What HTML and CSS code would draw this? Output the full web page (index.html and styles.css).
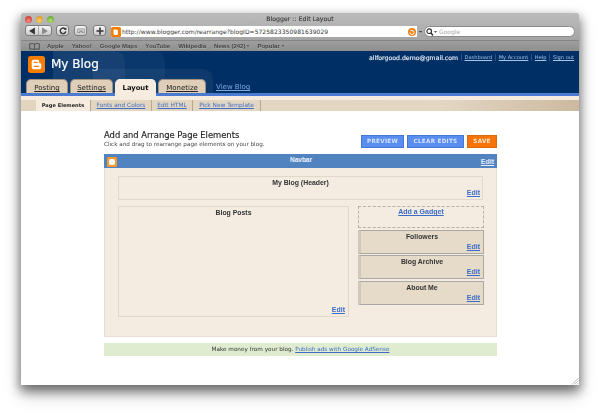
FILE: index.html
```html
<!DOCTYPE html>
<html lang="en">
<head>
<meta charset="utf-8">
<title>Blogger :: Edit Layout</title>
<link rel="stylesheet" href="styles.css">
</head>
<body>
<div class="window">
  <div class="chrome">
    <div class="titlebar">
      <div class="lights"><span class="light red"></span><span class="light amber"></span><span class="light green"></span></div>
      <div class="wintitle">Blogger :: Edit Layout</div>
    </div>
    <div class="toolbar">
      <div class="tbtn double">
        <span class="half"><svg width="7" height="7" viewBox="0 0 7 7"><path d="M6 0.5V6.5L1 3.5Z" fill="#333"/></svg></span>
        <span class="half"><svg width="7" height="7" viewBox="0 0 7 7"><path d="M1 0.5V6.5L6 3.5Z" fill="#888"/></svg></span>
      </div>
      <div class="tbtn"><svg width="9" height="9" viewBox="0 0 9 9"><path d="M7 2.2A3.2 3.2 0 1 0 7.7 5" fill="none" stroke="#333" stroke-width="1.5"/><path d="M5.4 2.8L8.4 3.4V0.4Z" fill="#333"/></svg></div>
      <div class="tbtn wide"><svg width="13" height="9" viewBox="0 0 13 9"><path d="M1 1H12V7H8L6.5 5L5 7H1Z" fill="none" stroke="#777" stroke-width="1"/><path d="M3 3L10 6M10 3L3 6" stroke="#777" stroke-width=".8"/></svg></div>
      <div class="tbtn add"><svg width="9" height="9" viewBox="0 0 9 9"><path d="M4.500 .5V8.500M.5 4.500H8.500" stroke="#333" stroke-width="1.800"/></svg></div>
      <div class="urlbar">
        <svg class="favicon" width="10" height="10" viewBox="0 0 10 10"><rect width="10" height="10" rx="1.500" fill="#f57d00"/><path d="M3 2.500H5.500Q7 2.500 7 4V6.500Q7 8 5.500 8H4Q2.500 8 2.500 6.500V3Q2.500 2.500 3 2.500Z" fill="#fff"/></svg>
        <span class="url">http://www.blogger.com/rearrange?blogID=5725823350981639029</span>
        <svg class="rss" width="8" height="8" viewBox="0 0 8 8"><circle cx="4" cy="4" r="4" fill="#f0801a"/><path d="M2 4.500A2 2 0 1 0 4 2.500H2.500" fill="none" stroke="#fff" stroke-width="1"/></svg>
      </div>
      <span class="dash">-</span>
      <div class="search">
        <svg width="11" height="8" viewBox="0 0 11 8"><circle cx="3.200" cy="3.200" r="2.300" fill="none" stroke="#333" stroke-width="1.200"/><path d="M5 5L7 7.500" stroke="#333" stroke-width="1.400"/><path d="M8 3H11L9.500 5Z" fill="#555"/></svg>
        <span>Google</span>
      </div>
    </div>
    <div class="bookmarks">
      <svg width="11" height="7" viewBox="0 0 11 7"><path d="M5.500 1.200Q3 0 .7 .8V6.200Q3 5.500 5.500 6.500Q8 5.500 10.300 6.200V.8Q8 0 5.500 1.200ZM5.500 1.200V6.500" fill="none" stroke="#444" stroke-width=".8"/></svg>
      <span class="bm first">Apple</span><span class="bm">Yahoo!</span><span class="bm">Google Maps</span><span class="bm">YouTube</span><span class="bm">Wikipedia</span><span class="bm">News (242)<i class="caret"></i></span><span class="bm">Popular<i class="caret"></i></span>
    </div>
  </div>

  <div class="blogheader">
    <svg class="watermark" width="165" height="42" viewBox="0 0 165 42"><path d="M0 0H60Q72 0 72 12V42H0Z" fill="#fff" opacity=".05"/><path d="M0 0H100Q112 0 112 12V42H0Z" fill="#fff" opacity=".04"/><path d="M40 18H148Q160 18 160 30V42H40Z" fill="#fff" opacity=".05"/></svg>
    <div class="headrow">
      <div class="brand">
        <svg class="logo" width="17" height="17" viewBox="0 0 16 16"><rect width="16" height="16" rx="2.500" fill="#f57d00"/><path d="M5.500 3.500H9Q10.500 3.500 10.500 5.500V6.500Q12.500 6.500 12.500 8V10Q12.500 12.500 10 12.500H6Q3.500 12.500 3.500 10V5.500Q3.500 3.500 5.500 3.500Z" fill="#fff"/><path d="M6 6H8.500M6 9.800H10" stroke="#f57d00" stroke-width="1.200" stroke-linecap="round"/></svg>
        <span class="blogname">My Blog</span>
      </div>
      <div class="account">
        <span class="email">allforgood.demo@gmail.com</span>
        <a class="alink">Dashboard</a><a class="alink">My Account</a><a class="alink">Help</a><a class="alink">Sign out</a>
      </div>
    </div>
    <div class="tabs">
      <a class="tab tposting">Posting</a>
      <a class="tab tsettings">Settings</a>
      <a class="tab active">Layout</a>
      <a class="tab tmonetize">Monetize</a>
      <a class="viewblog">View Blog</a>
    </div>
  </div>
  <div class="blueline"></div>
  <div class="creamline"></div>
  <div class="subnav">
    <span class="sub current">Page Elements</span>
    <a class="sub s1">Fonts and Colors</a>
    <a class="sub s2">Edit HTML</a>
    <a class="sub s3">Pick New Template</a>
  </div>

  <div class="content">
    <div class="titlerow">
      <div class="titles">
        <h1>Add and Arrange Page Elements</h1>
        <p>Click and drag to rearrange page elements on your blog.</p>
      </div>
      <div class="actions">
        <span class="btn blue bprev">PREVIEW</span>
        <span class="btn blue bclear">CLEAR EDITS</span>
        <span class="btn orange bsave">SAVE</span>
      </div>
    </div>
    <div class="panel">
      <div class="navbar">
        <svg class="navicon" width="10" height="10" viewBox="0 0 10 10"><rect width="10" height="10" rx="1.500" fill="#f59a2e"/><path d="M3.500 2H6Q8 2 8 4V6Q8 8 6 8H4Q2 8 2 6V3.500Q2 2 3.500 2Z" fill="#fff"/></svg>
        <span class="navtitle">Navbar</span>
        <a class="navedit">Edit</a>
      </div>
      <div class="panelbody">
        <div class="box headerbox">
          <div class="boxtitle">My Blog (Header)</div>
          <a class="edit">Edit</a>
        </div>
        <div class="cols">
          <div class="box posts">
            <div class="boxtitle">Blog Posts</div>
            <a class="edit">Edit</a>
          </div>
          <div class="sidebar">
            <div class="addgadget"><a>Add a Gadget</a></div>
            <div class="gadget"><div class="boxtitle">Followers</div><a class="edit">Edit</a></div>
            <div class="gadget"><div class="boxtitle">Blog Archive</div><a class="edit">Edit</a></div>
            <div class="gadget"><div class="boxtitle">About Me</div><a class="edit">Edit</a></div>
          </div>
        </div>
      </div>
    </div>
    <div class="adsense">Make money from your blog. <a>Publish ads with Google AdSense</a></div>
  </div>
  <svg class="grip" width="8" height="8" viewBox="0 0 8 8"><path d="M7.500 1L1 7.500M7.500 3.500L3.500 7.500M7.500 6L6 7.500" stroke="#aaa" stroke-width=".8"/></svg>
</div>
</body>
</html>
```

FILE: styles.css
```css
* { box-sizing: border-box; }
html, body { margin: 0; padding: 0; background: #fff; }
body { width: 600px; height: 414px; overflow: hidden; padding: 13px 21px 0; font-family: "DejaVu Sans", sans-serif; }
a { text-decoration: underline; cursor: pointer; }

.window { position: relative; width: 558px; height: 372px; background: #fff; display: flex; flex-direction: column; box-shadow: 0 5px 11px 1px rgba(0,0,0,.5), 0 10px 18px rgba(0,0,0,.2); filter: blur(.45px); border-radius: 2px 2px 0 0; }

.chrome { height: 38px; display: flex; flex-direction: column; }
.titlebar { height: 11px; background: linear-gradient(#bcbcbc, #b3b3b3); display: flex; align-items: center; position: relative; border-radius: 2px 2px 0 0; }
.lights { display: flex; gap: 4px; padding-left: 4px; margin-top: 1px; }
.light { width: 7px; height: 7px; border-radius: 50%; }
.red { background: radial-gradient(circle at 50% 70%, #f58a80, #c9261f); }
.amber { background: radial-gradient(circle at 50% 70%, #f7d070, #d98a14); }
.green { background: radial-gradient(circle at 50% 70%, #b4e07a, #4f9c22); }
.wintitle { position: absolute; left: 0; right: 0; top: 1px; text-align: center; font-size: 6.200px; line-height: 9px; letter-spacing: .02px; color: #333; margin-top: 0; -webkit-text-stroke: .1px #333; }

.toolbar { height: 16px; background: linear-gradient(#b3b3b3, #a4a4a4); display: flex; align-items: center; padding: 0 4px 3px 4px; }
.tbtn { width: 13px; height: 11px; margin-right: 5px; border: 1px solid #7d7d7d; border-radius: 3px; background: linear-gradient(#f6f6f6, #c9c9c9); display: flex; align-items: center; justify-content: center; flex: none; }
.tbtn.double { width: 27px; justify-content: stretch; margin-right: 4px; }
.tbtn.wide { margin-right: 6px; }
.half { flex: 1; display: flex; align-items: center; justify-content: center; height: 100%; }
.half + .half { border-left: 1px solid #aaa; }
.tbtn svg { width: 8px; height: 8px; }
.urlbar { width: 306px; height: 11px; margin-top: 2px; background: #fff; display: flex; align-items: center; padding: 0; flex: none; }
.favicon { flex: none; margin-right: 1px; }
.url { flex: 1; font-size: 6px; letter-spacing: .05px; color: #333; white-space: nowrap; overflow: hidden; }
.rss { flex: none; margin-right: 1px; }
.dash { width: 7px; margin-top: 2px; text-align: center; font-size: 8px; line-height: 9px; font-weight: bold; color: #444; flex: none; }
.search { flex: 1; height: 11px; margin-top: 2px; border: 1px solid #8a8a8a; border-radius: 6px; background: #fff; display: flex; align-items: center; gap: 2px; padding-left: 1px; font-size: 6px; color: #aaa; }

.bookmarks { flex: 1; background: linear-gradient(#9e9e9e, #8f8f8f); border-top: 1px solid #868686; display: flex; align-items: center; padding-left: 8px; font: bold 6px/8px "Liberation Sans", sans-serif; color: #444; text-shadow: 0 .5px 0 rgba(255,255,255,.25); }
.bm { margin-left: 8px; white-space: nowrap; }
.bm.first { margin-left: 7px; }
.caret { display: inline-block; width: 0; height: 0; margin-left: 2px; vertical-align: 1px; border: 1.500px solid transparent; border-top: 2px solid #444; border-bottom: 0; }

.blogheader { position: relative; height: 42px; background: #002f66; display: flex; flex-direction: column; }
.watermark { position: absolute; left: 32px; top: 0; }
.headrow { position: relative; height: 28px; display: flex; justify-content: space-between; }
.brand { display: flex; align-items: flex-start; padding: 5px 0 0 7px; }
.logo { flex: none; }
.blogname { margin: 1px 0 0 6px; font-size: 12px; line-height: 15px; color: #fff; -webkit-text-stroke: .2px #fff; }
.account { display: flex; align-items: flex-start; padding: 2px 5px 0 0; font-size: 5.100px; line-height: 8px; color: #bcd; }
.email { font-size: 6.200px; color: #e8edf3; margin-right: 3px; line-height: 9px; -webkit-text-stroke: .15px #e8edf3; }
.alink { color: #a9c4e4; padding: 0 3px 0 2.500px; border-left: 1px solid #2a5288; margin-top: 1px; line-height: 7px; white-space: nowrap; }
.alink:last-child { padding-right: 0; }

.tabs { position: relative; flex: 1; display: flex; align-items: flex-end; padding-left: 5px; gap: 2px; }
.tab { height: 14px; padding-top: 3px; background: #dfcfb8; border: 1px solid #a09280; border-bottom: 0; border-radius: 5px 5px 0 0; font-size: 7px; line-height: 10px; text-align: center; color: #222; }
.tposting { width: 42px; }
.tsettings { width: 43px; }
.tab.active { position: relative; width: 41px; height: 17px; margin-bottom: -3px; background: #f6ecdf; border-color: #f6ecdf; font-weight: bold; text-decoration: none; color: #111; font-size: 6.800px; }
.tmonetize { width: 48px; }
.viewblog { margin-left: 8px; font-size: 7px; line-height: 11px; color: #7fa8de; }

.blueline { height: 2.500px; background: #4b7bd0; flex: none; }
.creamline { height: 4.500px; background: #f5ebde; flex: none; }
.subnav { height: 11px; display: flex; align-items: stretch; background: linear-gradient(90deg, #e2d5c0 0, #e3d7c4 75%, #cdb9a0 100%); padding-left: 15px; font-size: 5.850px; line-height: 11px; flex: none; }
.sub { border-right: 1px solid #b9a78e; text-align: center; color: #3f6fc8; white-space: nowrap; }
.current { width: 55px; background: #f5ebde; color: #222; font-weight: bold; font-size: 5.100px; }
.s1 { width: 61px; }
.s2 { width: 41px; }
.s3 { width: 68px; }

.content { padding: 18px 0 0 83px; width: 476px; display: flex; flex-direction: column; }
.titlerow { height: 25px; display: flex; justify-content: space-between; align-items: flex-start; }
.titles { padding-top: 1px; }
h1 { margin: 0; font-size: 8.400px; line-height: 10px; font-weight: normal; color: #222; white-space: nowrap; -webkit-text-stroke: .15px #222; }
.titles p { margin: 0; font-size: 5.650px; line-height: 8px; color: #444; white-space: nowrap; }
.actions { display: flex; gap: 3px; margin-top: 6px; }
.btn { height: 13px; font-size: 5.700px; text-align: center; color: #d5e3fb; font-weight: bold; letter-spacing: .25px; }
.blue { background: #5a8df0; border: 1px solid #4478d4; line-height: 11px; }
.orange { background: #f7740a; border: 1px solid #dd6a08; color: #fde7d0; line-height: 11px; }
.bprev { width: 43px; }
.bclear { width: 57px; }
.bsave { width: 30px; }

.panel { width: 393px; height: 183px; background: #f4ebe1; border: 1px solid #e8ddd0; border-top: 0; }
.navbar { position: relative; height: 14px; background: #5083c0; display: flex; justify-content: center; margin: 0 -1px; }
.navicon { position: absolute; left: 3px; top: 3px; }
.navtitle { color: #eef3fa; font: bold 6.500px/11px "Liberation Sans", sans-serif; margin-left: 1px; }
.navedit { position: absolute; right: 3px; top: 3px; font: bold 7px/10px "Liberation Sans", sans-serif; color: #e4ecf7; }
.panelbody { padding: 8px 13px 0 13px; display: flex; flex-direction: column; gap: 6px; }
.box { border: 1px solid #e2d8ca; display: flex; flex-direction: column; justify-content: space-between; }
.headerbox { height: 24px; }
.headerbox .edit { margin-right: 2px; }
.cols { display: flex; justify-content: space-between; width: 366px; }
.posts { width: 231px; height: 111px; }
.boxtitle { font: bold 6.900px/9px "Liberation Sans", sans-serif; color: #333; text-align: center; padding-top: 1px; }
.edit { align-self: flex-end; margin-right: 3px; font: bold 7px/9px "Liberation Sans", sans-serif; color: #3c6cc8; }
.posts .edit, .headerbox .edit { margin-bottom: 2px; }
.sidebar { width: 126px; display: flex; flex-direction: column; gap: 1.500px; }
.addgadget { height: 22px; border: 1px dashed #bbb0a0; text-align: center; font: bold 7px/9px "Liberation Sans", sans-serif; color: #3c6cc8; }
.addgadget a { display: block; }
.gadget { height: 24px; background: #e6dac8; border: 1px solid #aaa8a4; border-left: 3px solid #cfc8bc; display: flex; flex-direction: column; justify-content: space-between; }
.gadget .edit { margin-bottom: 2px; }

.adsense { width: 393px; height: 13px; margin-top: 6px; background: #dfecd0; text-align: center; font-size: 5.700px; line-height: 13px; color: #333; white-space: nowrap; }
.adsense a { color: #3c6cc8; }

.grip { position: absolute; right: 0; bottom: 0; }
```
